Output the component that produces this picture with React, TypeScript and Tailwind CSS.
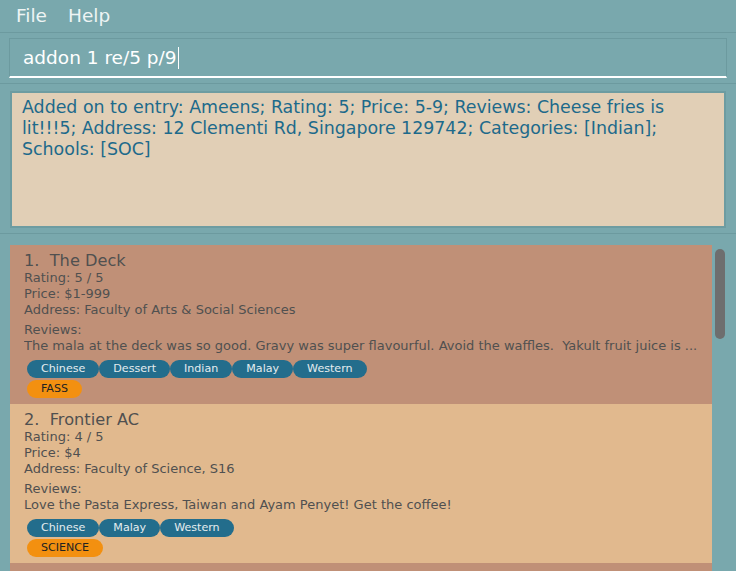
import React from "react";

type Entry = {
  idx: number;
  name: string;
  rating: string;
  price: string;
  address: string;
  review: string;
  tags: string[];
  school: string;
};

const entries: Entry[] = [
  {
    idx: 1,
    name: "The Deck",
    rating: "5 / 5",
    price: "$1-999",
    address: "Faculty of Arts & Social Sciences",
    review:
      "The mala at the deck was so good. Gravy was super flavourful. Avoid the waffles.  Yakult fruit juice is ...",
    tags: ["Chinese", "Dessert", "Indian", "Malay", "Western"],
    school: "FASS",
  },
  {
    idx: 2,
    name: "Frontier AC",
    rating: "4 / 5",
    price: "$4",
    address: "Faculty of Science, S16",
    review: "Love the Pasta Express, Taiwan and Ayam Penyet! Get the coffee!",
    tags: ["Chinese", "Malay", "Western"],
    school: "SCIENCE",
  },
];

function Card({ e, odd }: { e: Entry; odd: boolean }) {
  return (
    <div className={`w-[702px] h-[159px] pl-[14px] pt-[6px] text-[#505050] ${odd ? "bg-[#c09077]" : "bg-[#e1b98e]"}`}>
      <div className="text-[16.2px] leading-[19px] whitespace-pre">{`${e.idx}.  ${e.name}`}</div>
      <div className="text-[13px] leading-[16px]">Rating: {e.rating}</div>
      <div className="text-[13px] leading-[16px]">Price: {e.price}</div>
      <div className="text-[13px] leading-[16px]">Address: {e.address}</div>
      <div className="text-[13px] leading-[16px] mt-[4px]">Reviews:</div>
      <div className="text-[13px] leading-[16px] whitespace-pre overflow-hidden w-[680px]">{e.review}</div>
      <div className="flex ml-[3px] mt-[6px]">
        {e.tags.map((t) => (
          <span key={t} className="h-[18px] px-[14px] rounded-full bg-[#236d8c] text-[#e3ecef] text-[11.1px] leading-[18px]">
            {t}
          </span>
        ))}
      </div>
      <div className="flex ml-[3px] mt-[2px]">
        <span className="h-[18px] px-[14px] rounded-full bg-[#f39010] text-[#222] text-[11.1px] leading-[18px]">{e.school}</span>
      </div>
    </div>
  );
}

export default function App() {
  return (
    <div className="w-[736px] h-[571px] bg-[#79a8ad] overflow-hidden font-['DejaVu_Sans',sans-serif]">
      <div className="h-[33px] flex items-center gap-[21px] px-4 text-[18.5px] text-[#eef4f4] border-b border-[#6c9a9f]">
        <span>File</span>
        <span>Help</span>
      </div>
      <div className="h-[51px] px-[9px] pt-[5px] border-b border-[#6c9a9f]">
        <div className="h-[40px] w-[718px] border border-[#6c9a9f] border-b-2 border-b-white pl-[13px] flex items-center text-[18.5px] text-white">
          <span>addon 1 re/5 p/9</span>
          <span className="w-px h-[22px] bg-white ml-[1px]" />
        </div>
      </div>
      <div className="h-[150px] px-[10px] pt-[7px] border-b border-[#6c9a9f]">
        <div className="h-[137px] w-[716px] border-2 border-[#6d9ca1] bg-[#e1cfb6] pl-[10px] pt-[4px] text-[17.4px] leading-[21px] text-[#1d6a8b]">
          <div className="whitespace-nowrap">Added on to entry: Ameens; Rating: 5; Price: 5-9; Reviews: Cheese fries is</div>
          <div className="whitespace-nowrap">lit!!!5; Address: 12 Clementi Rd, Singapore 129742; Categories: [Indian];</div>
          <div className="whitespace-nowrap">Schools: [SOC]</div>
        </div>
      </div>
      <div className="flex pl-[10px] pt-[11px]">
        <div className="flex flex-col">
          {entries.map((e, i) => (
            <Card key={e.idx} e={e} odd={i % 2 === 0} />
          ))}
          <div className="w-[702px] h-[20px] bg-[#c09077]" />
        </div>
        <div className="ml-[3px] w-[10px]">
          <div className="mt-[4px] h-[90px] rounded-full bg-[#6e6e6e]" />
        </div>
      </div>
    </div>
  );
}
